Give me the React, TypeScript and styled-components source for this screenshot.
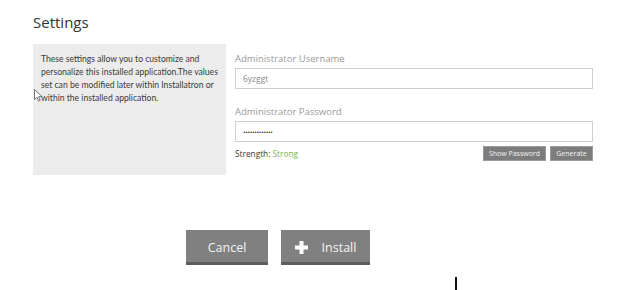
import React from 'react'
import styled, { createGlobalStyle } from 'styled-components'

const Global = createGlobalStyle`
  html, body {
    margin: 0;
    padding: 0;
    background: #ffffff;
  }
  body {
    font-family: 'Open Sans', 'Noto Sans', sans-serif;
    width: 624px;
    height: 290px;
    overflow: hidden;
  }
`

const Page = styled.div`
  position: relative;
  width: 624px;
  height: 290px;
  padding: 12px 0 0 33px;
  box-sizing: border-box;
`

const Title = styled.h2`
  margin: 0 0 12px 0;
  font-size: 15px;
  font-weight: 400;
  line-height: 20px;
  color: #333;
`

const Row = styled.div`
  display: flex;
  gap: 9px;
`

const Help = styled.div`
  width: 193px;
  height: 131px;
  background: #ececec;
  box-sizing: border-box;
  padding: 9px 8px 0 8px;
  font-family: Lato, 'Open Sans', sans-serif;
  font-size: 8.6px;
  line-height: 13px;
  color: #3a3a3a;
`

const Form = styled.div`
  width: 358px;
  padding-top: 8px;
`

const Field = styled.div<{ $gap?: number }>`
  margin-bottom: ${p => p.$gap ?? 0}px;
`

const Label = styled.div`
  font-size: 9.5px;
  line-height: 13px;
  color: #9a9a9a;
  margin-bottom: 3px;
`

const Input = styled.div`
  height: 21px;
  border: 1px solid #cfcfcf;
  box-sizing: border-box;
  padding: 0 7px;
  display: flex;
  align-items: center;
  font-size: 8.5px;
  color: #8a8a8a;
`

const Dots = styled.span`
  color: #333;
  font-size: 9px;
  letter-spacing: -0.3px;
  font-weight: 700;
`

const StrengthRow = styled.div`
  display: flex;
  align-items: center;
  justify-content: space-between;
  margin-top: 4px;
`

const Strength = styled.div`
  font-size: 8.3px;
  color: #3a3a3a;
  span {
    color: #79b83a;
  }
`

const SmallButtons = styled.div`
  display: flex;
  gap: 4px;
`

const SmallButton = styled.div<{ $w: number }>`
  width: ${p => p.$w}px;
  height: 15px;
  box-sizing: border-box;
  background: #7d7d7d;
  border: 1px solid #9b9b9b;
  color: #f2f2f2;
  font-size: 7px;
  display: flex;
  align-items: center;
  justify-content: center;
`

const Actions = styled.div`
  display: flex;
  gap: 13px;
  margin: 55px 0 0 153px;
`

const BigButton = styled.div<{ $w: number }>`
  width: ${p => p.$w}px;
  height: 35px;
  box-sizing: border-box;
  background: #808080;
  border-bottom: 3px solid #5e5e5e;
  color: #f4f4f4;
  font-size: 12.5px;
  display: flex;
  align-items: center;
  justify-content: center;
  gap: 14px;
  padding-top: 2px;
`

const Caret = styled.div`
  position: absolute;
  left: 455px;
  top: 277px;
  width: 2px;
  height: 13px;
  background: #111;
`

const Pointer = styled.svg`
  position: absolute;
  left: 34px;
  top: 89px;
`

const App = () => {
  return (
    <>
      <Global />
      <Page>
        <Title>Settings</Title>
        <Row>
          <Help>
            These settings allow you to customize and personalize this installed application.The values set can be
            modified later within Installatron or within the installed application.
          </Help>
          <Form>
            <Field $gap={16}>
              <Label>Administrator Username</Label>
              <Input>6yzggt</Input>
            </Field>
            <Field>
              <Label>Administrator Password</Label>
              <Input>
                <Dots>·············</Dots>
              </Input>
              <StrengthRow>
                <Strength>
                  Strength: <span>Strong</span>
                </Strength>
                <SmallButtons>
                  <SmallButton $w={63}>Show Password</SmallButton>
                  <SmallButton $w={43}>Generate</SmallButton>
                </SmallButtons>
              </StrengthRow>
            </Field>
          </Form>
        </Row>
        <Actions>
          <BigButton $w={82}>Cancel</BigButton>
          <BigButton $w={89}>
            <svg width="13" height="13" viewBox="0 0 13 13">
              <rect x="4.5" y="0" width="4" height="13" fill="#fff" />
              <rect x="0" y="4.5" width="13" height="4" fill="#fff" />
            </svg>
            Install
          </BigButton>
        </Actions>
        <Pointer width="9" height="13" viewBox="0 0 9 13">
          <path d="M0.5 0.5 L0.5 10.5 L3 8.2 L4.6 12 L6.2 11.3 L4.6 7.6 L8 7.6 Z" fill="#fff" stroke="#555" strokeWidth="0.8" />
        </Pointer>
        <Caret />
      </Page>
    </>
  )
}

export default App
